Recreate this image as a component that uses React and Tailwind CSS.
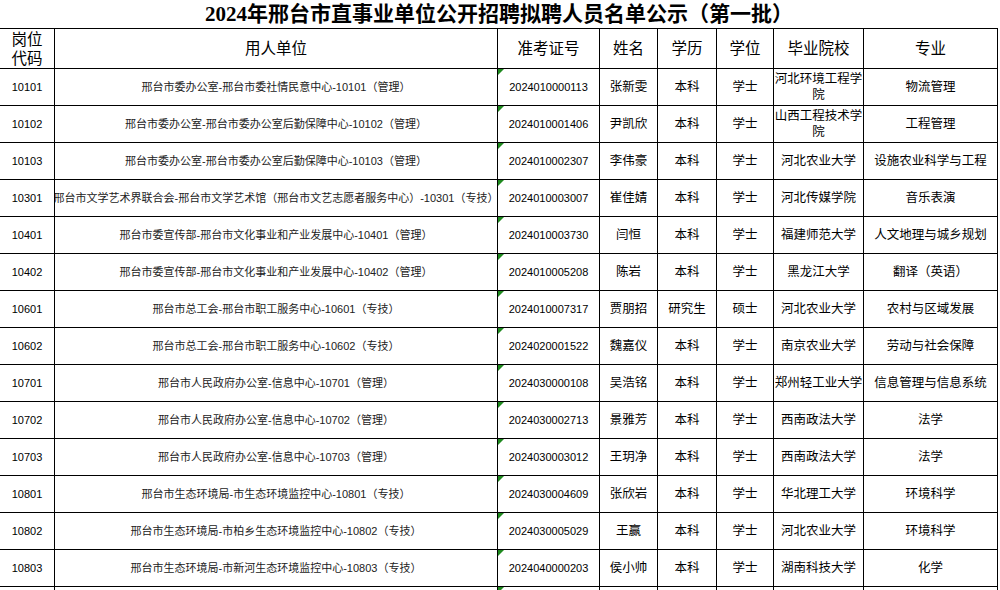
const rows = [
  ['10101', '邢台市委办公室-邢台市委社情民意中心-10101（管理）', '2024010000113', '张新雯', '本科', '学士', '河北环境工程学院', '物流管理'],
  ['10102', '邢台市委办公室-邢台市委办公室后勤保障中心-10102（管理）', '2024010001406', '尹凯欣', '本科', '学士', '山西工程技术学院', '工程管理'],
  ['10103', '邢台市委办公室-邢台市委办公室后勤保障中心-10103（管理）', '2024010002307', '李伟豪', '本科', '学士', '河北农业大学', '设施农业科学与工程'],
  ['10301', '邢台市文学艺术界联合会-邢台市文学艺术馆（邢台市文艺志愿者服务中心）-10301（专技）', '2024010003007', '崔佳婧', '本科', '学士', '河北传媒学院', '音乐表演'],
  ['10401', '邢台市委宣传部-邢台市文化事业和产业发展中心-10401（管理）', '2024010003730', '闫恒', '本科', '学士', '福建师范大学', '人文地理与城乡规划'],
  ['10402', '邢台市委宣传部-邢台市文化事业和产业发展中心-10402（管理）', '2024010005208', '陈岩', '本科', '学士', '黑龙江大学', '翻译（英语）'],
  ['10601', '邢台市总工会-邢台市职工服务中心-10601（专技）', '2024010007317', '贾朋招', '研究生', '硕士', '河北农业大学', '农村与区域发展'],
  ['10602', '邢台市总工会-邢台市职工服务中心-10602（专技）', '2024020001522', '魏嘉仪', '本科', '学士', '南京农业大学', '劳动与社会保障'],
  ['10701', '邢台市人民政府办公室-信息中心-10701（管理）', '2024030000108', '吴浩铭', '本科', '学士', '郑州轻工业大学', '信息管理与信息系统'],
  ['10702', '邢台市人民政府办公室-信息中心-10702（管理）', '2024030002713', '景雅芳', '本科', '学士', '西南政法大学', '法学'],
  ['10703', '邢台市人民政府办公室-信息中心-10703（管理）', '2024030003012', '王玥净', '本科', '学士', '西南政法大学', '法学'],
  ['10801', '邢台市生态环境局-市生态环境监控中心-10801（专技）', '2024030004609', '张欣岩', '本科', '学士', '华北理工大学', '环境科学'],
  ['10802', '邢台市生态环境局-市柏乡生态环境监控中心-10802（专技）', '2024030005029', '王赢', '本科', '学士', '河北农业大学', '环境科学'],
  ['10803', '邢台市生态环境局-市新河生态环境监控中心-10803（专技）', '2024040000203', '侯小帅', '本科', '学士', '湖南科技大学', '化学']
]

const grid = 'grid grid-cols-[55px_443px_102px_58px_59px_57px_90px_134px] w-[998px] border-b border-black'
const cell = 'flex items-center justify-center text-center border-r border-black overflow-hidden'

// green corner mark Excel puts on numbers stored as text
const TextMark = () => (
  <svg className="absolute left-0 top-0" width="6" height="6" viewBox="0 0 6 6">
    <polygon points="0,0 6,0 0,6" fill="#1f8a1f" />
  </svg>
)

const App = () => {
  return (
    <div
      className="w-[1000px] h-[590px] overflow-hidden bg-white text-black"
      style={{ fontFamily: '"Liberation Sans", "Noto Sans CJK SC", sans-serif' }}
    >
      {/* 标题 */}
      <div
        className="h-[28px] w-[998px] flex items-center justify-center text-[21px] font-bold leading-none"
        style={{ fontFamily: '"Liberation Serif", "Noto Sans CJK SC", serif' }}
      >
        2024年邢台市直事业单位公开招聘拟聘人员名单公示（第一批）
      </div>

      <div className="border-t border-black w-[998px]">
        {/* 表头 */}
        <div className={`${grid} h-[40px] text-[15.5px] leading-[19px]`}>
          <div className={cell}>岗位<br />代码</div>
          <div className={cell}>用人单位</div>
          <div className={cell}>准考证号</div>
          <div className={cell}>姓名</div>
          <div className={cell}>学历</div>
          <div className={cell}>学位</div>
          <div className={cell}>毕业院校</div>
          <div className={cell}>专业</div>
        </div>

        {/* 名单 */}
        {rows.map((r) => (
          <div key={r[2]} className={`${grid} h-[37px] text-[12.5px] leading-[16px]`}>
            <div className={`${cell} text-[11px]`}>{r[0]}</div>
            <div className={`${cell} text-[11px] text-[#222] whitespace-nowrap`}>
              <span className="shrink-0">{r[1]}</span>
            </div>
            <div className={`${cell} relative text-[11px]`}>
              <TextMark />
              {r[2]}
            </div>
            <div className={cell}>{r[3]}</div>
            <div className={cell}>{r[4]}</div>
            <div className={cell}>{r[5]}</div>
            <div className={cell}>{r[6]}</div>
            <div className={cell}>{r[7]}</div>
          </div>
        ))}

        {/* 下一行（被截断） */}
        <div className={`${grid} h-[37px]`}>
          <div className={cell}></div>
          <div className={cell}></div>
          <div className={`${cell} relative`}><TextMark /></div>
          <div className={cell}></div>
          <div className={cell}></div>
          <div className={cell}></div>
          <div className={cell}></div>
          <div className={cell}></div>
        </div>
      </div>
    </div>
  )
}

export default App
